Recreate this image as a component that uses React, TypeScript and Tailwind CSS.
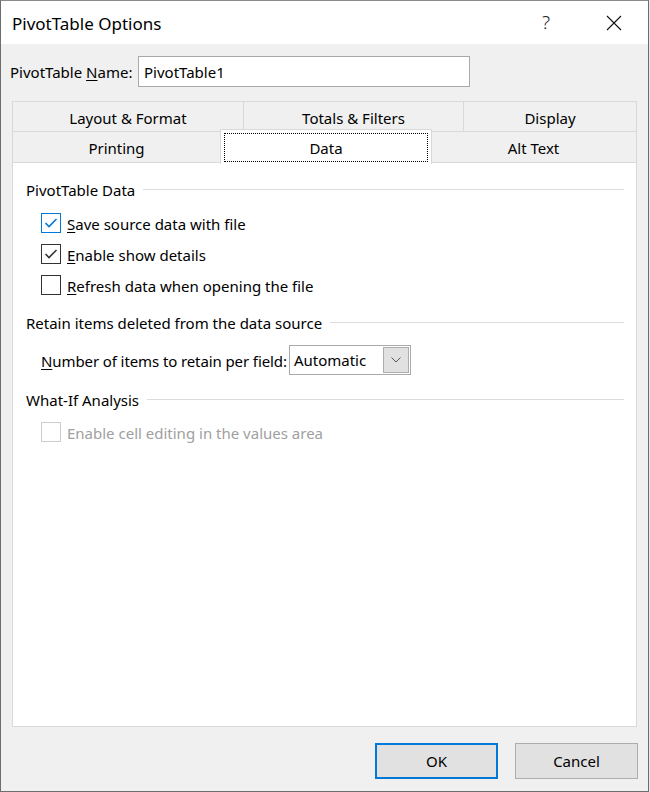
import React from 'react'

const font = { fontFamily: '"Noto Sans", "Liberation Sans", sans-serif' }

function Check({ color }: { color: string }) {
  return (
    <svg width="18" height="18" viewBox="0 0 18 18" className="block">
      <polyline points="3.5,9 7,12.5 14.5,5" fill="none" stroke={color} strokeWidth="1.6" />
    </svg>
  )
}

function CheckRow({
  checked,
  focused,
  disabled,
  accel,
  rest,
}: {
  checked?: boolean
  focused?: boolean
  disabled?: boolean
  accel: string
  rest: string
}) {
  const border = focused ? 'border-[#0078d7]' : disabled ? 'border-[#cccccc]' : 'border-[#333333]'
  return (
    <div className="flex h-[31px] items-center pl-[15px]">
      <div className={`flex h-[20px] w-[20px] items-center justify-center border bg-white ${border}`}>
        {checked && <Check color={focused ? '#0078d7' : '#333333'} />}
      </div>
      <span className={`relative top-[2px] ml-[6px] text-[15px] ${disabled ? 'text-[#a0a0a0]' : 'text-black'}`}>
        {accel ? <span className="underline underline-offset-2">{accel}</span> : null}
        {rest}
      </span>
    </div>
  )
}

function Heading({ title }: { title: string }) {
  return (
    <div className="flex h-[20px] items-center">
      <span className="relative top-[1px] text-[15px] text-black">{title}</span>
      <div className="ml-[8px] h-px flex-1 bg-[#dcdcdc]" />
    </div>
  )
}

function Tab({ label, width }: { label: string; width: string }) {
  return (
    <div className={`flex h-full items-center justify-center pt-[3px] text-[15px] text-black ${width}`}>
      {label}
    </div>
  )
}

export default function App() {
  return (
    <div className="h-[792px] w-[650px] bg-[#e8e8e8]" style={font}>
      <div className="flex h-[792px] w-[649px] flex-col border border-t-[#8a8a8a] border-l-[#6d6d6d] border-r-[#6d6d6d] border-b-[#6d6d6d] bg-[#f0f0f0]">
        {/* Title bar */}
        <div className="flex h-[43px] items-center bg-white">
          <span className="relative top-[1px] ml-[11px] text-[17px] text-black">PivotTable Options</span>
          <span className="ml-auto mr-[56px] text-[19px] font-light text-[#222]">?</span>
          <svg width="16" height="16" viewBox="0 0 16 16" className="mr-[26px]">
            <path d="M1 1 L15 15 M15 1 L1 15" stroke="#111" strokeWidth="1.1" fill="none" />
          </svg>
        </div>

        {/* Name row */}
        <div className="mt-[12px] flex h-[31px] items-center">
          <span className="relative top-[1px] ml-[9px] text-[15px] text-black">
            PivotTable <span className="underline underline-offset-2">N</span>ame:
          </span>
          <div className="ml-auto mr-[178px] flex h-[31px] w-[332px] items-center border border-[#a9a9a9] bg-white pl-[5px] pt-[1px] text-[15px] text-black">
            PivotTable1
          </div>
        </div>

        {/* Tabs */}
        <div className="ml-[11px] mt-[14px] w-[625px]">
          <div className="flex h-[31px] border border-[#d9d9d9] bg-[#f0f0f0]">
            <Tab label="Layout & Format" width="w-[231px] border-r border-[#d9d9d9]" />
            <Tab label="Totals & Filters" width="w-[220px] border-r border-[#d9d9d9]" />
            <Tab label="Display" width="flex-1" />
          </div>
          <div className="relative flex h-[31px] border-x border-b border-[#d9d9d9] bg-[#f0f0f0]">
            <Tab label="Printing" width="w-[207px]" />
            <div className="w-[211px]" />
            <Tab label="Alt Text" width="flex-1" />
            <div className="absolute left-[207px] top-[-3px] z-10 flex h-[35px] w-[212px] border-x border-t border-[#d9d9d9] bg-white px-[3px] pb-[2px] pt-[3px]">
              <div className="flex flex-1 items-center justify-center border border-dotted border-black pt-[2px] text-[15px] text-black">
                Data
              </div>
            </div>
          </div>

          {/* Panel */}
          <div className="h-[564px] border-x border-b border-[#d9d9d9] bg-white pl-[13px] pr-[12px] pt-[16px]">
            <Heading title="PivotTable Data" />
            <div className="mt-[8px]">
              <CheckRow checked focused accel="S" rest="ave source data with file" />
              <CheckRow checked accel="E" rest="nable show details" />
              <CheckRow accel="R" rest="efresh data when opening the file" />
            </div>
            <div className="mt-[12px]">
              <Heading title="Retain items deleted from the data source" />
            </div>
            <div className="mt-[13px] flex h-[30px] items-center pl-[15px]">
              <span className="relative top-[1px] text-[15px] tracking-[-0.1px] text-black">
                <span className="underline underline-offset-2">N</span>umber of items to retain per field:
              </span>
              <div className="ml-[2px] flex h-[30px] w-[122px] items-center border border-[#a9a9a9] bg-white pl-[4px] pr-px">
                <span className="flex-1 text-[15px] text-black">Automatic</span>
                <div className="flex h-[26px] w-[26px] items-center justify-center border border-[#adadad] bg-[#e1e1e1]">
                  <svg width="10" height="6" viewBox="0 0 10 6">
                    <polyline points="0.5,0.5 5,5 9.5,0.5" fill="none" stroke="#555" strokeWidth="1" />
                  </svg>
                </div>
              </div>
            </div>
            <div className="mt-[14px]">
              <Heading title="What-If Analysis" />
            </div>
            <div className="mt-[7px]">
              <CheckRow disabled accel="" rest="Enable cell editing in the values area" />
            </div>
          </div>
        </div>

        {/* Buttons */}
        <div className="mt-[16px] flex justify-end gap-[17px] pr-[10px]">
          <button className="h-[36px] w-[123px] border-2 border-[#0078d7] bg-[#e1e1e1] pt-[1px] text-[15px] text-black">
            OK
          </button>
          <button className="h-[36px] w-[123px] border border-[#adadad] bg-[#e1e1e1] pt-[1px] text-[15px] text-black">
            Cancel
          </button>
        </div>
      </div>
    </div>
  )
}
